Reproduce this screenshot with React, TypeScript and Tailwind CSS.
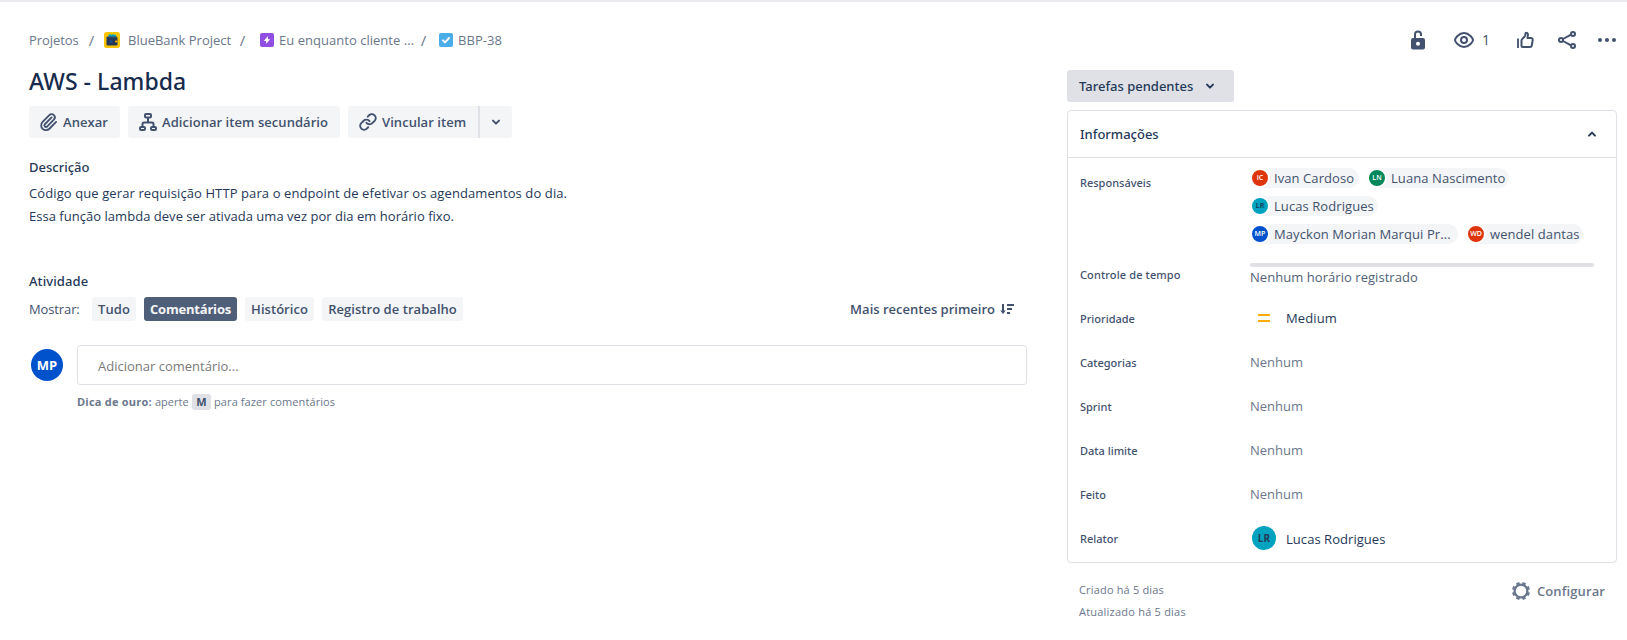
import type { ReactNode } from "react";

const stroke = {
  fill: "none",
  stroke: "currentColor",
  strokeWidth: 2,
  strokeLinecap: "round" as const,
  strokeLinejoin: "round" as const,
};

function Icon({ children, className = "size-6" }: { children: ReactNode; className?: string }) {
  return (
    <svg viewBox="0 0 24 24" className={`block shrink-0 ${className}`}>
      {children}
    </svg>
  );
}

function Chevron({ up = false }: { up?: boolean }) {
  return (
    <Icon>
      <path d={up ? "M9 13.6 12 10.6 15 13.6" : "M9 10.6 12 13.6 15 10.6"} {...stroke} />
    </Icon>
  );
}

function AttachIcon() {
  return (
    <Icon>
      <path
        d="m16 6-8.414 8.586a2 2 0 0 0 2.829 2.829l8.414-8.586a4 4 0 1 0-5.657-5.657l-8.379 8.551a6 6 0 1 0 8.485 8.485l8.379-8.551"
        {...stroke}
        strokeWidth={2.3}
        transform="translate(1.8 2.6) scale(.8)"
      />
    </Icon>
  );
}

function ChildIcon() {
  return (
    <Icon>
      <rect x="9" y="4" width="6" height="3.4" rx="1" {...stroke} />
      <rect x="4" y="17" width="5" height="3" rx="1" {...stroke} />
      <rect x="15" y="17" width="5" height="3" rx="1" {...stroke} />
      <path d="M12 8v4.5M6.5 16.5V14a1.5 1.5 0 0 1 1.5-1.5h8a1.5 1.5 0 0 1 1.5 1.5v2.5" {...stroke} />
    </Icon>
  );
}

function LinkIcon() {
  return (
    <Icon>
      <g {...stroke} strokeWidth={2.5} transform="translate(2.6 2.6) scale(.78)">
        <path d="M10 13a5 5 0 0 0 7.54.54l3-3a5 5 0 0 0-7.07-7.07l-1.72 1.71" />
        <path d="M14 11a5 5 0 0 0-7.54-.54l-3 3a5 5 0 0 0 7.07 7.07l1.710-1.710" />
      </g>
    </Icon>
  );
}

function UnlockIcon() {
  return (
    <Icon>
      <path d="M9 11V6.5a3 3 0 0 1 6 0V8" {...stroke} strokeLinecap="butt" />
      <path
        fillRule="evenodd"
        fill="currentColor"
        d="M7 10h10a2 2 0 0 1 2 2v7.500a2 2 0 0 1-2 2H7a2 2 0 0 1-2-2V12a2 2 0 0 1 2-2Zm5 3.700a2 2 0 1 0 0 4 2 2 0 0 0 0-4Z"
      />
    </Icon>
  );
}

function WatchIcon() {
  return (
    <Icon>
      <path d="M3 12c0-1.5 3.6-7 9-7s9 5.5 9 7-3.6 7-9 7-9-5.5-9-7Z" {...stroke} />
      <circle cx="12" cy="12" r="3" {...stroke} />
    </Icon>
  );
}

function LikeIcon() {
  return (
    <Icon>
      <path d="M5 11.5V19" {...stroke} strokeLinecap="square" strokeWidth={1.8} />
      <path
        d="M8.500 18V12.500c0-.6.2-1 .6-1.400l2.300-2.400c.4-.4.6-.8.7-1.300l.3-1.800c.1-.6.5-.9 1.100-.8.9.1 1.500.8 1.400 1.700L14.500 10H18a1.700 1.700 0 0 1 1.700 2l-.9 5.500A1.800 1.800 0 0 1 17 19H9.500a1 1 0 0 1-1-1Z"
        {...stroke}
      />
    </Icon>
  );
}

function ShareIcon() {
  return (
    <Icon>
      <path d="m8 11 7.5-4.2M8 13l7.5 4.2" {...stroke} />
      <circle cx="6" cy="12" r="2" {...stroke} />
      <circle cx="18" cy="6" r="2" {...stroke} />
      <circle cx="18" cy="18" r="2" {...stroke} />
    </Icon>
  );
}

function MoreIcon() {
  return (
    <Icon>
      <g fill="currentColor">
        <circle cx="5" cy="12" r="2" />
        <circle cx="12" cy="12" r="2" />
        <circle cx="19" cy="12" r="2" />
      </g>
    </Icon>
  );
}

function GearIcon() {
  return (
    <Icon>
      <circle cx="12" cy="12" r="6.4" {...stroke} strokeWidth={2.3} />
      <g {...stroke} strokeWidth={3.4} strokeLinecap="butt">
        {[22.5, 67.5, 112.5, 157.5, 202.5, 247.5, 292.5, 337.5].map((a) => (
          <path key={a} d="M12 3V6" transform={`rotate(${a} 12 12)`} />
        ))}
      </g>
    </Icon>
  );
}

function SortIcon() {
  return (
    <svg viewBox="0 0 14 12" className="block h-3 w-3.5 shrink-0">
      <path d="M3 1v8.5" {...stroke} strokeLinecap="butt" />
      <path d="M0.300 7.500h5.400L3 11Z" fill="currentColor" />
      <path d="M7 2h7M7 6h5M7 10h3" {...stroke} strokeLinecap="butt" strokeWidth={1.8} />
    </svg>
  );
}

function ProjectIcon() {
  return (
    <svg viewBox="0 0 16 16" className="block size-4 shrink-0">
      <rect width="16" height="16" rx="2.5" fill="#FFC400" />
      <path d="M4 5.500 4.500 3 6 2l1.500 1L9 2l1.500 1 1.500-.6.500 3.100Z" fill="#00A3BF" />
      <rect x="2.5" y="4.8" width="11" height="8.7" rx="1.2" fill="#253858" />
      <rect x="2.5" y="4.8" width="10.5" height="1.5" rx=".7" fill="#344563" />
      <circle cx="7" cy="9.5" r="1.5" fill="#1D4E89" />
      <rect x="11" y="8.4" width="2.5" height="2" rx=".8" fill="#FFAB00" />
    </svg>
  );
}

function EpicIcon() {
  return (
    <svg viewBox="0 0 14 14" className="block size-3.5 shrink-0">
      <rect width="14" height="14" rx="2" fill="#904EE2" />
      <path d="M7.900 3v3.200h2.300L6.100 11V7.900H3.900Z" fill="#fff" />
    </svg>
  );
}

function TaskIcon() {
  return (
    <svg viewBox="0 0 14 14" className="block size-3.5 shrink-0">
      <rect width="14" height="14" rx="2" fill="#4BADE8" />
      <path d="m4 7.400 2 2L10 5" fill="none" stroke="#fff" strokeWidth="2" strokeLinecap="round" strokeLinejoin="round" />
    </svg>
  );
}

function ActionButton({ icon, width, children }: { icon: ReactNode; width: string; children: ReactNode }) {
  return (
    <button className={`flex h-8 items-center gap-0.5 rounded-[3px] bg-[#F4F5F7] pl-2 font-semibold whitespace-nowrap ${width}`}>
      {icon}
      <span>{children}</span>
    </button>
  );
}

function Filter({ width, active = false, children }: { width: string; active?: boolean; children: ReactNode }) {
  return (
    <button
      className={`flex h-6 items-center justify-center rounded-[3px] whitespace-nowrap ${width} ${
        active
          ? "bg-[#505F79] font-bold tracking-[-0.2px] text-[#F4F5F7]"
          : "bg-[#F4F5F7] font-semibold tracking-[0.05px] text-[#42526E]"
      }`}
    >
      {children}
    </button>
  );
}

function Person({ initials, color, width, children }: { initials: string; color: string; width: string; children: ReactNode }) {
  return (
    <div className={`flex h-5 items-center rounded-full bg-[#F4F5F7] whitespace-nowrap ${width}`}>
      <span className={`box-content flex size-4 shrink-0 items-center justify-center rounded-full border-2 border-white text-[7px] font-semibold ${color}`}>
        {initials}
      </span>
      <span className="ml-1 leading-[18px] tracking-[0.08px] text-[#42526E]">{children}</span>
    </div>
  );
}

function Row({ label, children }: { label: string; children: ReactNode }) {
  return (
    <div className="flex h-11">
      <div className="w-[170px] shrink-0 font-['Noto_Sans','Open_Sans',sans-serif] text-[11px] leading-[44px] font-medium">
        {label}
      </div>
      <div className="flex h-[42px] items-center text-[#6B778C]">{children}</div>
    </div>
  );
}

function Sep({ className }: { className: string }) {
  return <span className={`shrink-0 text-center text-[15px] ${className}`}>/</span>;
}

export default function App() {
  return (
    <div className="h-[640px] w-[1627px] overflow-hidden border-t-2 border-[#EBECF0] bg-white font-['Open_Sans','Noto_Sans',sans-serif] text-[13px] leading-5 text-[#42526E]">
      <div className="flex pl-[29px]">
        <main className="w-[998px] shrink-0 pt-7">
          <nav className="flex h-5 items-center whitespace-nowrap text-[#6B778C]">
            <span className="w-[50px] tracking-[-0.07px]">Projetos</span>
            <Sep className="w-[25px]" />
            <ProjectIcon />
            <span className="ml-[8px] w-[105px]">BlueBank Project</span>
            <Sep className="mr-[8px] w-[19px]" />
            <EpicIcon />
            <span className="ml-[5px] w-[136px] tracking-[0.03px]">Eu enquanto cliente ...</span>
            <Sep className="mr-[7px] w-[17px]" />
            <TaskIcon />
            <span className="ml-[5px] tracking-[0.05px]">BBP-38</span>
          </nav>

          <h1 className="mt-[17px] h-7 font-['Noto_Sans','Open_Sans',sans-serif] text-[23px] leading-7 font-medium tracking-[0.05px] whitespace-nowrap text-[#172B4D]">
            AWS - Lambda
          </h1>

          <div className="mt-[11px] flex gap-2 tracking-[0.05px]">
            <ActionButton width="w-[91px]" icon={<AttachIcon />}>Anexar</ActionButton>
            <ActionButton width="w-[212px]" icon={<ChildIcon />}>Adicionar item secundário</ActionButton>
            <div className="flex rounded-[3px] bg-[#F4F5F7]">
              <ActionButton width="w-[130px]" icon={<LinkIcon />}>Vincular item</ActionButton>
              <button className="flex h-8 w-[34px] items-center justify-center border-l-2 border-[#DFE1E6]">
                <Chevron />
              </button>
            </div>
          </div>

          <h2 className="mt-[19px] font-['Noto_Sans','Open_Sans',sans-serif] font-medium text-[#253858]">Descrição</h2>
          <div className="mt-[5px] leading-[22px] text-[#253858]">
            <p className="mb-px tracking-[0.1px]">
              Código que gerar requisição HTTP para o endpoint de efetivar os agendamentos do dia.
            </p>
            <p className="tracking-[0.03px]">Essa função lambda deve ser ativada uma vez por dia em horário fixo.</p>
          </div>

          <h2 className="mt-11 font-['Noto_Sans','Open_Sans',sans-serif] font-medium tracking-[0.1px] text-[#253858]">
            Atividade
          </h2>
          <div className="mt-1.5 flex h-6 items-center">
            <span className="w-[63px] tracking-[-0.12px]">Mostrar:</span>
            <div className="flex gap-2">
              <Filter width="w-11">Tudo</Filter>
              <Filter width="w-[93px]" active>Comentários</Filter>
              <Filter width="w-[69px]">Histórico</Filter>
              <Filter width="w-[141px]">Registro de trabalho</Filter>
            </div>
            <button className="mr-[13px] ml-auto flex items-center gap-[5px] font-semibold">
              Mais recentes primeiro
              <SortIcon />
            </button>
          </div>

          <div className="mt-6 flex">
            <span className="mt-1 ml-0.5 flex size-8 items-center justify-center rounded-full bg-[#0052CC] font-bold text-white">
              MP
            </span>
            <div className="ml-3.5 flex-1">
              <div className="h-10 rounded-[3px] border border-[#DFE1E6] pt-2.5 pl-5 text-[#7A7A7A]">Adicionar comentário...</div>
              <p className="mt-[9px] flex h-4 items-center text-[11px] leading-4 whitespace-nowrap text-[#6B778C]">
                <b className="w-[78px] tracking-[0.23px]">Dica de ouro:</b>
                <span className="w-[37px]">aperte</span>
                <b className="mr-[3px] w-[19px] rounded-[3px] bg-[#DFE1E6] text-center text-[#42526E]">M</b>
                <span className="tracking-[0.1px]">para fazer comentários</span>
              </p>
            </div>
          </div>
        </main>

        <aside className="ml-10 w-[550px] shrink-0 pt-[26px]">
          <div className="flex h-6 items-center">
            <span className="ml-[339px]"><UnlockIcon /></span>
            <span className="ml-[22px]"><WatchIcon /></span>
            <span className="ml-[6px] w-2 text-[14px]">1</span>
            <span className="ml-[23px]"><LikeIcon /></span>
            <span className="ml-[18px]"><ShareIcon /></span>
            <span className="ml-4"><MoreIcon /></span>
          </div>

          <button className="mt-[18px] flex h-8 w-[167px] items-center rounded-[3px] bg-[#DFE1E6] pl-3 font-['Noto_Sans','Open_Sans',sans-serif] font-medium text-[#253858]">
            <span className="w-[119px] text-left">Tarefas pendentes</span>
            <Chevron />
          </button>

          <section className="mt-2 h-[453px] rounded-[4px] border border-[#DFE1E6]">
            <header className="flex h-[47px] items-center justify-between border-b border-[#DFE1E6] pr-3 pl-3 font-['Noto_Sans','Open_Sans',sans-serif] font-medium text-[#253858]">
              <span>Informações</span>
              <Chevron up />
            </header>
            <div className="pl-3">
              <div className="flex h-[95px]">
                <div className="w-[170px] shrink-0 pt-[15px] font-['Noto_Sans','Open_Sans',sans-serif] text-[11px] font-medium">
                  Responsáveis
                </div>
                <div className="flex flex-col gap-2 pt-2.5">
                  <div className="flex gap-2">
                    <Person initials="IC" color="bg-[#DE350B] text-white" width="w-[109px]">Ivan Cardoso</Person>
                    <Person initials="LN" color="bg-[#00875A] text-white" width="w-[142px]">Luana Nascimento</Person>
                  </div>
                  <Person initials="LR" color="bg-[#00A3BF] text-[#172B4D]" width="w-[128px]">Lucas Rodrigues</Person>
                  <div className="flex gap-2">
                    <Person initials="MP" color="bg-[#0052CC] text-white" width="w-[208px]">Mayckon Morian Marqui Pr...</Person>
                    <Person initials="WD" color="bg-[#DE350B] text-white" width="w-[117px]">wendel dantas</Person>
                  </div>
                </div>
              </div>
              <div className="flex h-11">
                <div className="w-[170px] shrink-0 font-['Noto_Sans','Open_Sans',sans-serif] text-[11px] leading-[44px] font-medium tracking-[0.12px]">
                  Controle de tempo
                </div>
                <div className="pt-2.5">
                  <div className="h-1 w-[344px] rounded-full bg-[#DFE1E6]" />
                  <div className="tracking-[0.05px] text-[#505F79]">Nenhum horário registrado</div>
                </div>
              </div>
              <Row label="Prioridade">
                <svg viewBox="0 0 12 8" className="ml-2 h-2 w-3">
                  <path d="M0 1h12M0 7h12" stroke="#FFAB00" strokeWidth="2" />
                </svg>
                <span className="ml-4 tracking-[0.1px] text-[#253858]">Medium</span>
              </Row>
              <Row label="Categorias">Nenhum</Row>
              <Row label="Sprint">Nenhum</Row>
              <Row label="Data limite">Nenhum</Row>
              <Row label="Feito">Nenhum</Row>
              <Row label="Relator">
                <span className="ml-0.5 flex size-6 items-center justify-center rounded-full bg-[#00A3BF] text-[10px] font-bold text-[#253858]">
                  LR
                </span>
                <span className="mt-0.5 ml-2.5 tracking-[0.05px] text-[#253858]">Lucas Rodrigues</span>
              </Row>
            </div>
          </section>

          <footer className="mt-4 flex justify-between pr-3 pl-3 text-[#6B778C]">
            <div className="text-[11px] leading-[22px]">
              <p className="tracking-[0.17px]">Criado há 5 dias</p>
              <p className="tracking-[0.22px]">Atualizado há 5 dias</p>
            </div>
            <button className="flex h-6 items-center gap-1 font-semibold tracking-[0.1px]">
              <GearIcon />
              Configurar
            </button>
          </footer>
        </aside>
      </div>
    </div>
  );
}
